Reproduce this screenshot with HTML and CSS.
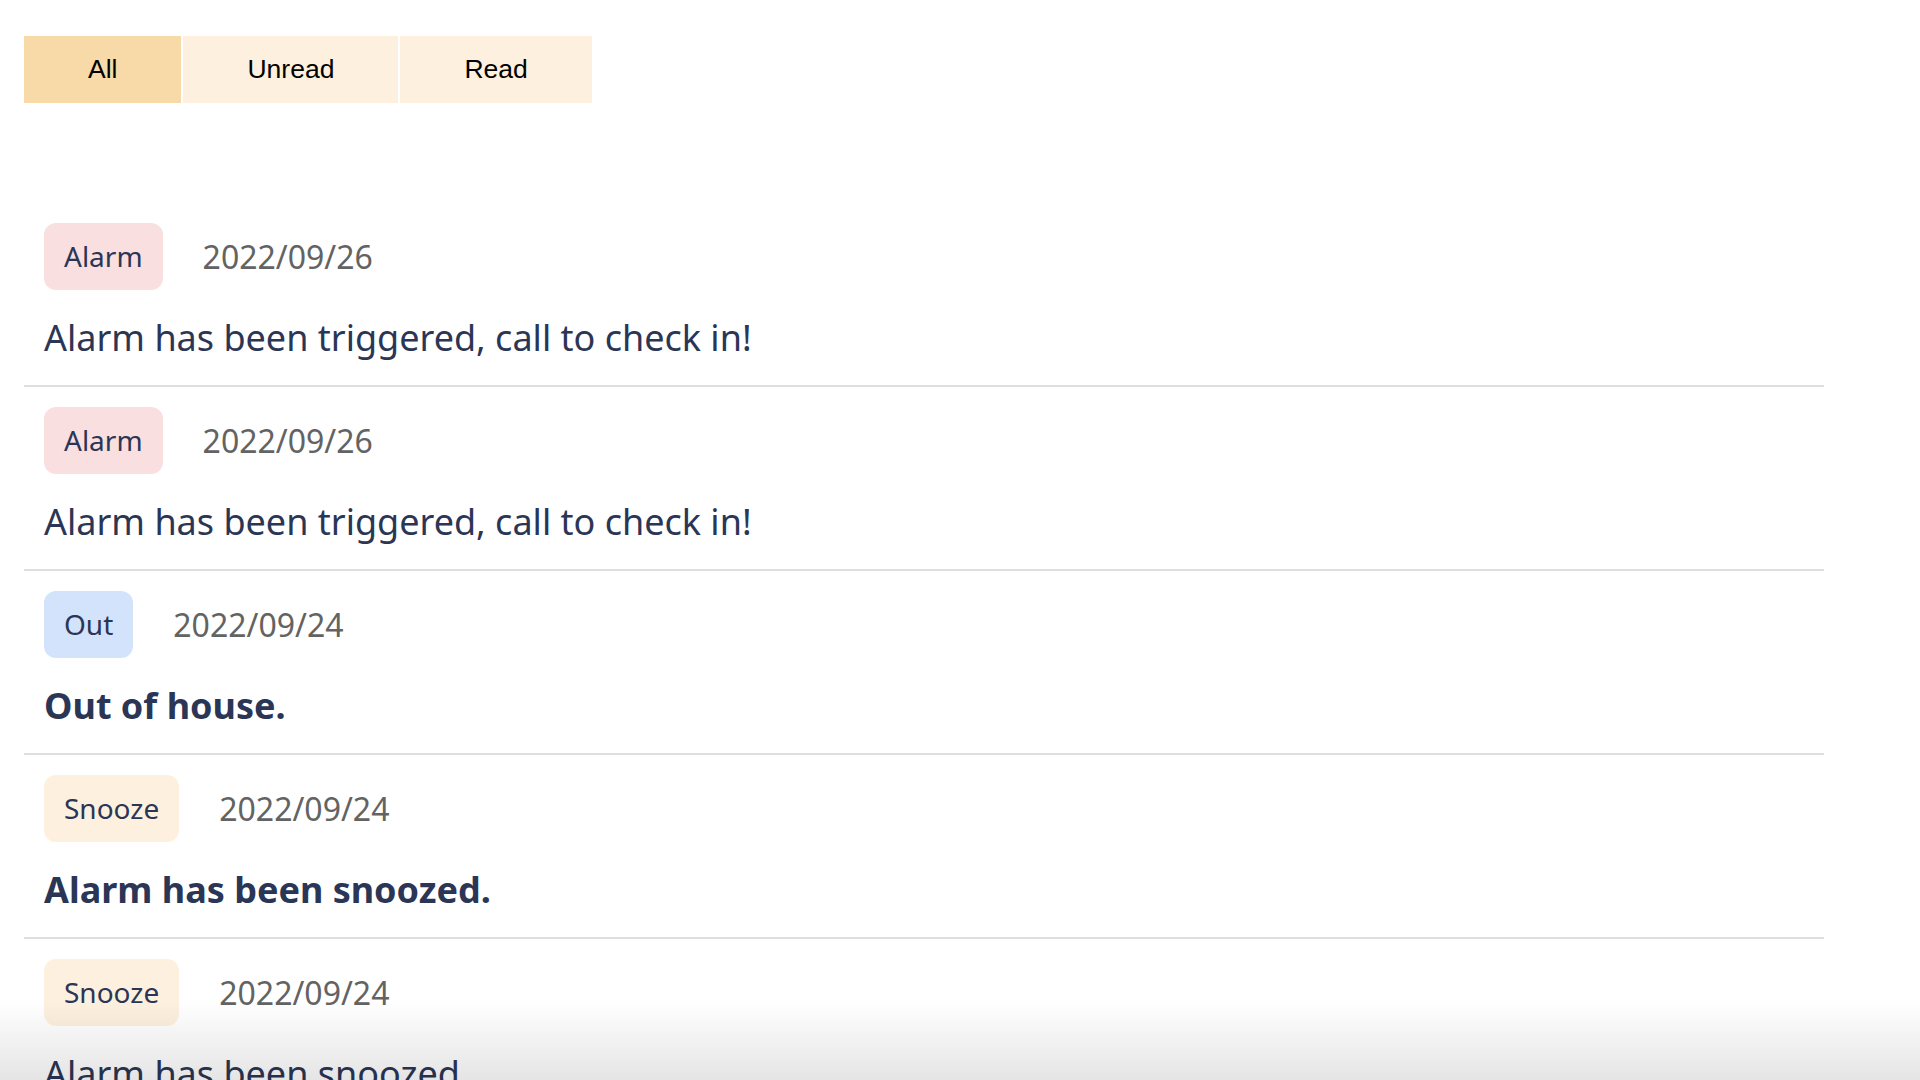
FILE: index.html
```html
<!DOCTYPE html>
<html lang="en">
<head>
<meta charset="utf-8">
<title>Notifications</title>
<link rel="stylesheet" href="styles.css">
</head>
<body>
<div class="page">
  <div class="tabs">
    <button class="tab tab-active">All</button>
    <button class="tab">Unread</button>
    <button class="tab">Read</button>
  </div>
  <ul class="list">
    <li class="item">
      <div class="item-head"><span class="badge badge-alarm">Alarm</span><span class="date">2022/09/26</span></div>
      <p class="msg">Alarm has been triggered, call to check in!</p>
    </li>
    <li class="item">
      <div class="item-head"><span class="badge badge-alarm">Alarm</span><span class="date">2022/09/26</span></div>
      <p class="msg">Alarm has been triggered, call to check in!</p>
    </li>
    <li class="item">
      <div class="item-head"><span class="badge badge-out">Out</span><span class="date">2022/09/24</span></div>
      <p class="msg msg-unread">Out of house.</p>
    </li>
    <li class="item">
      <div class="item-head"><span class="badge badge-snooze">Snooze</span><span class="date">2022/09/24</span></div>
      <p class="msg msg-unread">Alarm has been snoozed.</p>
    </li>
    <li class="item">
      <div class="item-head"><span class="badge badge-snooze">Snooze</span><span class="date">2022/09/24</span></div>
      <p class="msg">Alarm has been snoozed.</p>
    </li>
  </ul>
</div>
<div class="bottom-fade"></div>
</body>
</html>
```
FILE: styles.css
```css
html, body {
  margin: 0;
  padding: 0;
  background: #ffffff;
}
body {
  font-family: "Noto Sans", "Open Sans", sans-serif;
  color: #2b3656;
  overflow: hidden;
  height: 1080px;
}
.page {
  padding: 36px 96px 0 24px;
}
.tabs {
  display: flex;
  gap: 2px;
}
.tab {
  font-family: "Liberation Sans", Arial, sans-serif;
  font-size: 26.5px;
  line-height: 31px;
  color: #000;
  background: #fdf0de;
  border: none;
  padding: 18px 64px;
  margin: 0;
  cursor: pointer;
}
.tab-active {
  background: #f8d9a8;
}
.list {
  list-style: none;
  margin: 100px 0 0 0;
  padding: 0;
}
.item {
  padding: 20px 20px 23px;
  border-bottom: 2px solid #dedede;
}
.item-head {
  display: flex;
  align-items: center;
  gap: 40px;
}
.badge {
  font-size: 28px;
  line-height: 39px;
  padding: 14px 20px;
  border-radius: 12px;
  color: #2b3656;
}
.badge-alarm { background: #f9dfdf; }
.badge-out { background: #d3e3fb; }
.badge-snooze { background: #fdf0de; }
.date {
  font-size: 32px;
  color: #636363;
}
.msg {
  margin: 23px 0 0;
  font-size: 36px;
  line-height: 49px;
  color: #2b3656;
}
.msg-unread {
  font-weight: 700;
}
.bottom-fade {
  position: fixed;
  left: 0;
  right: 0;
  bottom: 0;
  height: 80px;
  background: linear-gradient(to bottom, rgba(0,0,0,0), rgba(0,0,0,0.1));
  pointer-events: none;
}
```
